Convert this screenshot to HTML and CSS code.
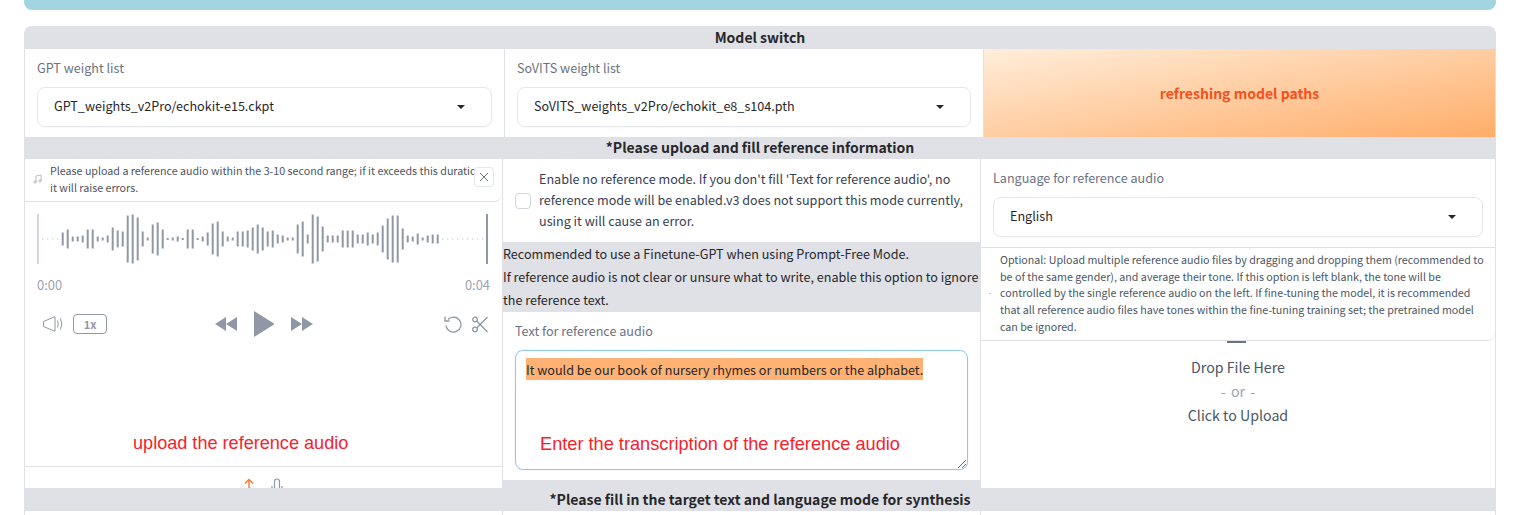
FILE: index.html
```html
<!DOCTYPE html>
<html lang="en">
<head>
    <meta charset="UTF-8">
    <title>GPT-SoVITS</title>
    <link rel="stylesheet" href="styles.css">
</head>
<body>
    <div class="top-bar"></div>
    <div class="panel">
        <div class="section-title">Model switch</div>
        <div class="model-row">
            <div class="field">
                <div class="label">GPT weight list</div>
                <div class="select"><span>GPT_weights_v2Pro/echokit-e15.ckpt</span><i class="caret"></i></div>
            </div>
            <div class="field">
                <div class="label">SoVITS weight list</div>
                <div class="select"><span>SoVITS_weights_v2Pro/echokit_e8_s104.pth</span><i class="caret"></i></div>
            </div>
            <div class="refresh">refreshing model paths</div>
        </div>

        <div class="section-title">*Please upload and fill reference information</div>
        <div class="ref-row">
            <!-- left: audio -->
            <div class="audio-col">
                <div class="notice audio-notice">
                    <svg class="music" width="10" height="10" viewBox="0 0 10 10" fill="none" stroke="#a8aeb8" stroke-width="0.8">
                        <path d="M3 8V2l5-1v6"/><circle cx="2" cy="8" r="1.2"/><circle cx="7" cy="7" r="1.2"/>
                    </svg>
                    <p>Please upload a reference audio within the 3-10 second range; if it exceeds this duration,<br>it will raise errors.</p>
                    <button class="close">
                        <svg width="10" height="10" viewBox="0 0 10 10" stroke="#6b7280" stroke-width="1"><path d="M1 1l8 8M9 1l-8 8"/></svg>
                    </button>
                </div>
                <svg class="wave" width="452" height="50" viewBox="0 0 452 50" fill="none" stroke-width="2">
                    <path stroke="#d9d2e6" d="M1 0v50"/>
                    <path stroke="#a9afb9" stroke-width="1" d="M5.7 24.5v1M10.7 24.5v1M15.7 24.5v1M20.7 24.5v1M405.7 24.5v1M410.7 24.5v1M415.7 24.5v1M420.7 24.5v1M425.7 24.5v1M430.7 24.5v1M435.7 24.5v1M440.7 24.5v1M445.7 24.5v1"/>
                    <path stroke="#8f98a4" d="M25.7 18.5v13M30.7 15.5v19M35.7 22.5v5M40.7 22.5v5M45.7 21.5v7M50.7 15.5v19M55.7 15.5v19M60.7 22.5v5M65.7 23.5v3M70.7 21.5v7M75.7 13.5v23M80.7 16.5v17M85.7 17.5v15M90.7 1.5v47M95.7 .5v49M100.7 3.5v43M105.7 17.5v15M110.7 23.5v3M115.7 10.5v29M120.7 8.5v33M125.7 15.5v19M130.7 24v2M135.7 23.5v3M140.7 22.5v5M145.7 24v2M150.7 15.5v19M155.7 15.5v19M160.7 24v2M165.7 22.5v5M170.7 18.5v13M175.7 9.5v31M180.7 7.5v35M185.7 17.5v15M190.7 22.5v5M195.7 23.5v3M200.7 17.5v15M205.7 17.5v15M210.7 16.5v17M215.7 13.5v23M220.7 10.5v29M225.7 13.5v23M230.7 17.5v15M235.7 16.5v17M240.7 20.5v9M245.7 21.5v7M250.7 23.5v3M255.7 23.5v3M260.7 10.5v29M265.7 7.5v35M270.7 20.5v9M275.7 .5v49M280.7 2.5v45M285.7 12.5v25M290.7 21.5v7M295.7 21.5v7M300.7 21.5v7M305.7 16.5v17M310.7 16.5v17M315.7 16.5v17M320.7 20.5v9M325.7 20.5v9M330.7 18.5v13M335.7 20.5v9M340.7 18.5v13M345.7 11.5v27M350.7 4.5v41M355.7 1.5v47M360.7 1.5v47M365.7 14.5v21M370.7 21.5v7M375.7 22.5v5M380.7 19.5v11M385.7 23.5v3M390.7 21.5v7M395.7 20.5v9M400.7 20.5v9M450 0v50"/>
                </svg>
                <div class="times"><span>0:00</span><span>0:04</span></div>
                <div class="controls">
                    <div class="ctrl-left">
                        <svg width="20" height="16" viewBox="0 0 20 16" fill="none" stroke="#8f98a4" stroke-width="1">
                            <path d="M.5 5.5L4 4 12 .7v14.6L4 12 .5 10.500z"/>
                            <path d="M14.500 4.500q1.500 3.500 0 7M17.500 2.500q2.500 5.500 0 11"/>
                        </svg>
                        <span class="speed">1x</span>
                    </div>
                    <div class="ctrl-mid">
                        <svg width="22" height="14" viewBox="0 0 22 14" fill="#8f98a4"><path d="M0 7L11 0v14zM11 7L22 0v14z"/></svg>
                        <svg width="20" height="26" viewBox="0 0 20 26" fill="#8f98a4"><path d="M0 0L21 13 0 26z"/></svg>
                        <svg width="22" height="14" viewBox="0 0 22 14" fill="#8f98a4"><path d="M0 0L11 7 0 14zM11 0L22 7 11 14z"/></svg>
                    </div>
                    <div class="ctrl-right">
                        <svg width="19" height="17" viewBox="0 0 19 17" fill="none" stroke="#8f98a4" stroke-width="1.300">
                            <path d="M4 3.500A7.500 7.500 0 1 1 2 9.500"/><path d="M1 .5v4.500h4.500"/>
                        </svg>
                        <svg width="16" height="17" viewBox="0 0 16 17" fill="none" stroke="#8f98a4" stroke-width="1.300">
                            <circle cx="3" cy="3.500" r="2.300"/><circle cx="3" cy="13.500" r="2.300"/>
                            <path d="M4.700 5L15.500 16M4.700 12L15.500 1"/>
                        </svg>
                    </div>
                </div>
                <div class="hint audio-hint">upload the reference audio</div>
                <div class="source-bar">
                    <svg width="10" height="11" viewBox="0 0 10 11" fill="none" stroke="#fb7c3c" stroke-width="1.500"><path d="M5 11V2M1 5.500L5 1.500l4 4"/></svg>
                    <svg width="12" height="11" viewBox="0 0 12 11" fill="none" stroke="#8f98a4" stroke-width="1.200"><rect x="3.500" y="1" width="5" height="14" rx="2.500"/><path d="M1 8v3M11 8v3"/></svg>
                </div>
            </div>

            <!-- middle: prompt text -->
            <div class="text-col">
                <label class="no-ref">
                    <i class="checkbox"></i>
                    <span>Enable no reference mode. If you don't fill 'Text for reference audio', no reference mode will be enabled.v3 does not support this mode currently, using it will cause an error.</span>
                </label>
                <div class="tip">Recommended to use a Finetune-GPT when using Prompt-Free Mode.<br>If reference audio is not clear or unsure what to write, enable this option to ignore the reference text.</div>
                <div class="prompt">
                    <div class="label">Text for reference audio</div>
                    <div class="textbox">
                        <span class="selected">It would be our book of nursery rhymes or numbers or the alphabet.</span>
                        <div class="hint text-hint">Enter the transcription of the reference audio</div>
                        <svg class="grip" width="9" height="9" viewBox="0 0 9 9" stroke="#6b7280" stroke-width="1"><path d="M1 9l8-8M5 9l4-4"/></svg>
                    </div>
                </div>
            </div>

            <!-- right: language and upload -->
            <div class="upload-col">
                <div class="field lang">
                    <div class="label">Language for reference audio</div>
                    <div class="select"><span>English</span><i class="caret"></i></div>
                </div>
                <div class="notice multi-notice">
                    <i class="dot"></i>
                    <p>Optional: Upload multiple reference audio files by dragging and dropping them (recommended to be of the same gender), and average their tone. If this option is left blank, the tone will be controlled by the single reference audio on the left. If fine-tuning the model, it is recommended that all reference audio files have tones within the fine-tuning training set; the pretrained model can be ignored.</p>
                </div>
                <div class="dropzone">
                    <i class="upload-stub"></i>
                    <div>Drop File Here</div>
                    <div class="or">- or -</div>
                    <div>Click to Upload</div>
                </div>
            </div>
        </div>

        <div class="section-title">*Please fill in the target text and language mode for synthesis</div>
        <div class="last-row"><div></div><div></div><div></div></div>
    </div>
</body>
</html>
```

FILE: styles.css
```css
* {
    box-sizing: border-box;
}
html, body {
    margin: 0;
    height: 515px;
    overflow: hidden;
    background: #fff;
}
body {
    font-family: "Noto Sans CJK SC", "Noto Sans", sans-serif;
    font-size: 12.6px;
    color: #27272a;
}
p {
    margin: 0;
}
.top-bar {
    height: 10px;
    margin: 0 36px 16px 24px;
    background: #a3d4e2;
    border-radius: 0 0 8px 8px;
}
.panel {
    margin: 0 36px 0 24px;
    background: #e0e1e6;
    border: solid #e0e1e6;
    border-width: 0 1px;
    border-radius: 8px 8px 0 0;
}
.section-title {
    height: 23px;
    line-height: 23px;
    text-align: center;
    font-weight: 700;
    font-size: 14px;
}

/* model row */
.model-row {
    display: grid;
    grid-template-columns: 479px 478px 1fr;
    column-gap: 1px;
    height: 87px;
}
.field {
    background: #fff;
    padding: 10px 12px;
}
.label {
    height: 19px;
    line-height: 17px;
    color: #6b7280;
}
.select {
    display: flex;
    justify-content: space-between;
    align-items: center;
    height: 40px;
    margin-top: 9px;
    padding: 0 26px 0 16px;
    background: #fff;
    border: 1px solid #e5e7eb;
    border-radius: 8px;
    box-shadow: 0 1px 2px rgba(0, 0, 0, .03);
}
.select span {
    margin-top: -3px;
}
.caret {
    width: 0;
    height: 0;
    border: solid transparent;
    border-width: 4px 4px 0;
    border-top-color: #27272a;
}
.refresh {
    display: flex;
    align-items: center;
    justify-content: center;
    background: linear-gradient(to bottom right, #ffeedb, #ffad69);
    color: #f4511e;
    font-weight: 600;
    font-size: 14px;
}

/* reference row */
.ref-row {
    display: grid;
    grid-template-columns: 477px 477px 1fr;
    column-gap: 1px;
    height: 329px;
}
.audio-col, .upload-col {
    position: relative;
    background: #fff;
    overflow: hidden;
}
.notice {
    position: relative;
    background: #fff;
    color: #4b5563;
    font-size: 10.7px;
    line-height: 16.700px;
    border-bottom: 1px solid #e0e1e6;
    border-radius: 0 0 8px 0;
}
.audio-notice {
    height: 43px;
    padding: 4px 0 0 25px;
    overflow: hidden;
}
.audio-notice p {
    white-space: nowrap;
}
.music {
    position: absolute;
    left: 8px;
    top: 15px;
}
.close {
    position: absolute;
    right: 8px;
    top: 8px;
    display: flex;
    align-items: center;
    justify-content: center;
    width: 20px;
    height: 20px;
    padding: 0;
    background: #fff;
    border: 1px solid #e5e7eb;
    border-radius: 4px;
}
.wave {
    display: block;
    margin: 12px 0 0 12px;
}
.times {
    display: flex;
    justify-content: space-between;
    margin: 11px 12px 0 12px;
    height: 20px;
    line-height: 20px;
    color: #9ca3af;
    font-size: 12.9px;
}
.controls {
    display: grid;
    grid-template-columns: 1fr auto 1fr;
    align-items: center;
    height: 26px;
    margin: 16px 18px 0 18px;
}
.ctrl-left {
    display: flex;
    align-items: center;
    gap: 10px;
}
.speed {
    width: 34px;
    height: 20px;
    line-height: 18px;
    text-align: center;
    font-size: 11px;
    font-weight: 600;
    color: #8f98a4;
    border: 1px solid #8f98a4;
    border-radius: 4px;
}
.ctrl-mid {
    display: flex;
    align-items: center;
    gap: 17px;
}
.ctrl-right {
    display: flex;
    justify-content: flex-end;
    align-items: center;
    gap: 9px;
    margin-right: -4px;
}
.hint {
    position: absolute;
    color: #f5222d;
    font-family: "Liberation Sans", sans-serif;
    font-size: 18.2px;
    line-height: 22px;
    white-space: nowrap;
}
.audio-hint {
    left: 108px;
    top: 273px;
    font-size: 18.1px;
}
.source-bar {
    position: absolute;
    left: 0;
    right: 0;
    top: 307px;
    height: 22px;
    border-top: 1px solid #e0e1e6;
    display: flex;
    justify-content: center;
    gap: 17px;
    padding-top: 11px;
}
.text-col {
    display: flex;
    flex-direction: column;
    height: 321px;
}
.no-ref {
    display: flex;
    align-items: center;
    gap: 8px;
    height: 83px;
    padding: 0 12px;
    background: #fff;
    color: #374151;
    line-height: 21px;
}
.no-ref span {
    margin-top: -2px;
}
.checkbox {
    flex: none;
    width: 16px;
    height: 16px;
    background: #fff;
    border: 1px solid #d1d5db;
    border-radius: 4px;
}
.tip {
    height: 70px;
    line-height: 23px;
}
.prompt {
    flex: 1;
    position: relative;
    background: #fff;
    padding: 10px 12px;
}
.textbox {
    position: relative;
    height: 120px;
    margin-top: 9px;
    padding: 7px 10px;
    line-height: 21px;
    border: 1px solid #93c5f0;
    border-radius: 8px;
    box-shadow: 0 0 2px #dbeafe;
}
.selected {
    background: #ffb273;
    padding: 1.5px 0;
}
.text-hint {
    left: 24px;
    top: 82px;
}
.grip {
    position: absolute;
    right: 1px;
    bottom: 1px;
}
.lang {
    height: 88px;
}
.multi-notice {
    height: 94px;
    padding: 4px 7px 0 19px;
    border-top: 1px solid #e0e1e6;
}
.dot {
    position: absolute;
    left: 8px;
    top: 45px;
    width: 2px;
    height: 1px;
    background: #c4c8ce;
}
.dropzone {
    text-align: center;
    color: #4b5563;
    font-size: 14.2px;
    line-height: 24px;
    padding: 14px 0 0 0;
}
.dropzone .or {
    color: #9ca3af;
    word-spacing: 2px;
}
.upload-stub {
    position: absolute;
    left: 246px;
    top: 182px;
    width: 19px;
    height: 2px;
    background: #6b7280;
}
.last-row {
    display: grid;
    grid-template-columns: 477px 477px 1fr;
    column-gap: 1px;
    height: 20px;
}
.last-row div {
    background: #fff;
}
```
